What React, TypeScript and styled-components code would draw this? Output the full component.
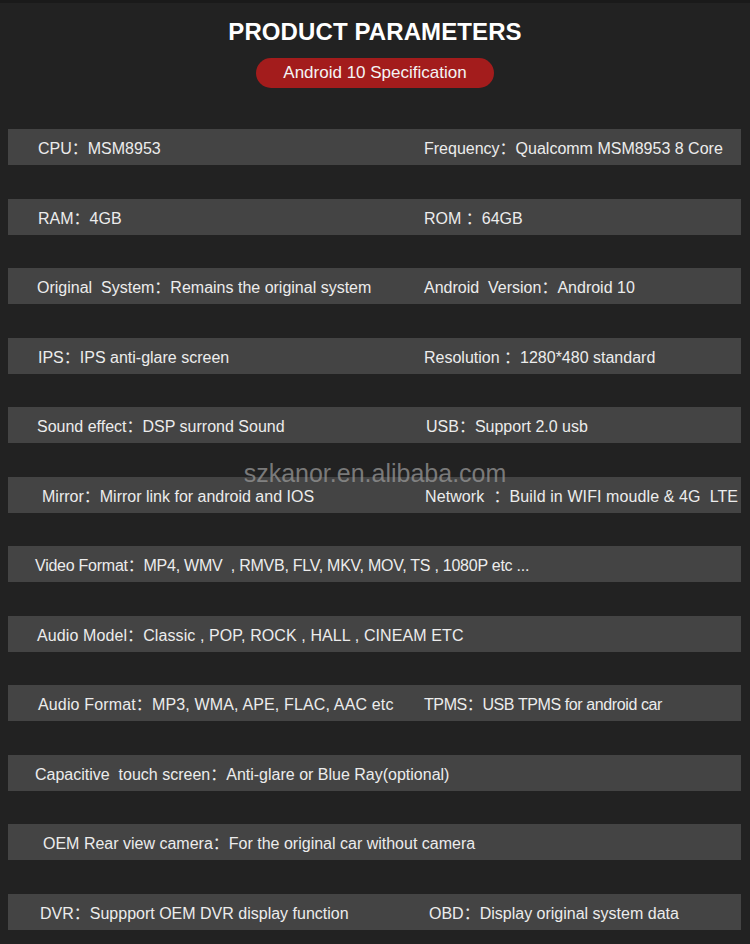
import React from "react";
import styled, { createGlobalStyle } from "styled-components";

const GlobalStyle = createGlobalStyle`
  html, body {
    margin: 0;
    padding: 0;
    background: #222222;
  }
`;

const Page = styled.div`
  position: relative;
  width: 750px;
  min-height: 944px;
  background: #222222;
  border-top: 3px solid #1a1a1a;
  box-sizing: border-box;
  font-family: "Liberation Sans", Arial, "Noto Sans CJK SC", sans-serif;
  color: #ececec;
  overflow: hidden;
`;

const Header = styled.header`
  display: flex;
  flex-direction: column;
  align-items: center;
  padding-top: 14px;
`;

const Title = styled.h1`
  margin: 0;
  font-size: 24px;
  line-height: 30px;
  font-weight: 700;
  color: #ffffff;
  letter-spacing: 0.1px;
`;

const Pill = styled.div`
  margin-top: 11px;
  width: 238px;
  height: 30px;
  border-radius: 15px;
  background: #a31c1c;
  display: flex;
  align-items: center;
  justify-content: center;
  font-size: 17px;
  color: #f4f4f4;
`;

const List = styled.div`
  display: flex;
  flex-direction: column;
  gap: 33.5px;
  padding: 41px 9px 0 8px;
`;

const Band = styled.div`
  display: flex;
  align-items: center;
  height: 36px;
  background: #444444;
`;

const Cell = styled.div<{ $pad: number; $width?: number; $size?: number; $spacing?: number }>`
  flex: ${(p) => (p.$width ? `0 0 ${p.$width}px` : "1 1 auto")};
  box-sizing: border-box;
  padding-left: ${(p) => p.$pad}px;
  white-space: pre;
  font-size: ${(p) => p.$size || 16}px;
  letter-spacing: ${(p) => p.$spacing || 0}px;
`;

const Watermark = styled.div`
  position: absolute;
  left: 0;
  right: 0;
  top: 458px;
  text-align: center;
  font-size: 25px;
  line-height: 1;
  color: rgba(150, 150, 150, 0.75);
  pointer-events: none;
`;

type Row = {
  left: string;
  lx: number;
  lspacing?: number;
  right?: string;
  rx?: number;
  rsize?: number;
  rspacing?: number;
};

const RIGHT_COL = 416;

const rows: Row[] = [
  { left: "CPU：MSM8953", lx: 38, right: "Frequency：Qualcomm MSM8953 8 Core", rx: 424 },
  { left: "RAM：4GB", lx: 38, right: "ROM ：64GB", rx: 424 },
  { left: "Original  System：Remains the original system", lx: 37, right: "Android  Version：Android 10", rx: 424 },
  { left: "IPS：IPS anti-glare screen", lx: 38, right: "Resolution ：1280*480 standard", rx: 424 },
  { left: "Sound effect：DSP surrond Sound", lx: 37, right: "USB：Support 2.0 usb", rx: 426 },
  { left: "Mirror：Mirror link for android and IOS", lx: 42, right: "Network  ：Build in WIFI moudle & 4G  LTE", rx: 425, rspacing: 0.1 },
  { left: "Video Format：MP4, WMV  , RMVB, FLV, MKV, MOV, TS , 1080P etc ...", lx: 35, lspacing: -0.25 },
  { left: "Audio Model：Classic , POP, ROCK , HALL , CINEAM ETC", lx: 37, lspacing: 0.1 },
  { left: "Audio Format：MP3, WMA, APE, FLAC, AAC etc", lx: 38, lspacing: 0.15, right: "TPMS：USB TPMS for android car", rx: 421, rspacing: -0.4 },
  { left: "Capacitive  touch screen：Anti-glare or Blue Ray(optional)", lx: 35 },
  { left: "OEM Rear view camera：For the original car without camera", lx: 43 },
  { left: "DVR：Suppport OEM DVR display function", lx: 40, right: "OBD：Display original system data", rx: 429 },
];

const App = () => {
  return (
    <>
      <GlobalStyle />
      <Page>
        <Header>
          <Title>PRODUCT PARAMETERS</Title>
          <Pill>Android 10 Specification</Pill>
        </Header>

        <List>
          {rows.map((row, i) => (
            <Band key={i}>
              {row.right ? (
                <>
                  <Cell $pad={row.lx - 8} $width={RIGHT_COL} $spacing={row.lspacing}>{row.left}</Cell>
                  <Cell $pad={(row.rx || 424) - 8 - RIGHT_COL} $size={row.rsize} $spacing={row.rspacing}>{row.right}</Cell>
                </>
              ) : (
                <Cell $pad={row.lx - 8} $spacing={row.lspacing}>{row.left}</Cell>
              )}
            </Band>
          ))}
        </List>

        <Watermark>szkanor.en.alibaba.com</Watermark>
      </Page>
    </>
  );
};

export default App;
